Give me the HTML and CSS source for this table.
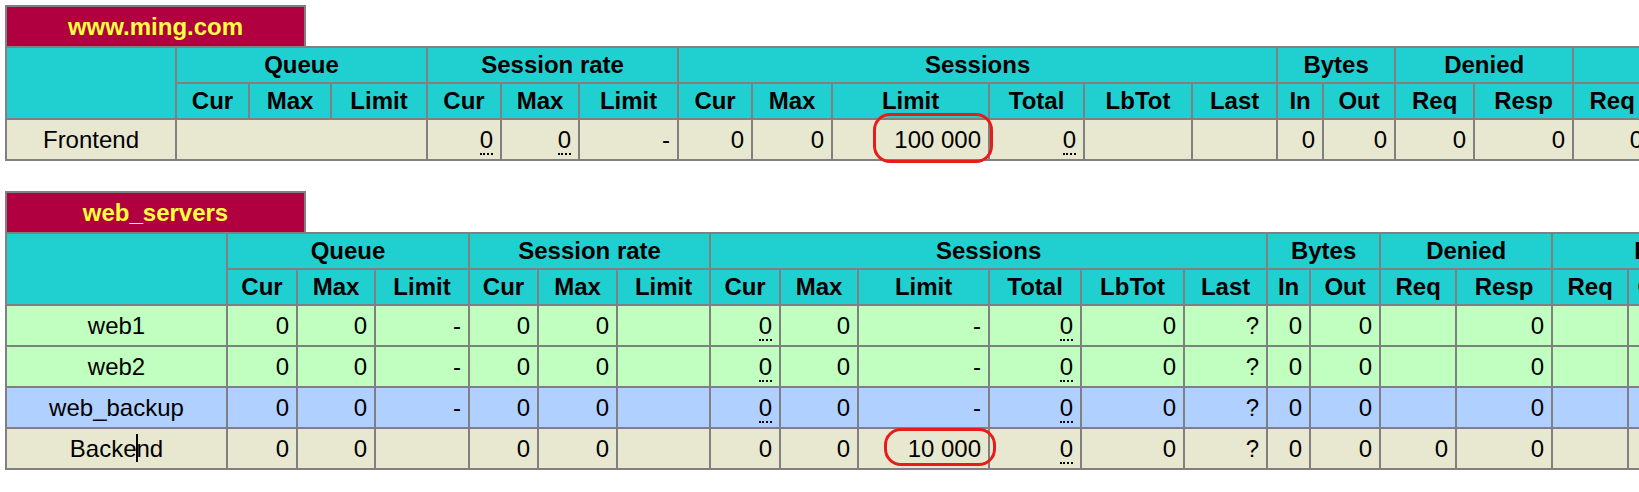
FILE: index.html
```html
<!DOCTYPE html>
<html>
<head>
<meta charset="utf-8">
<title>Statistics Report</title>
<link rel="stylesheet" href="styles.css">
</head>
<body>
<div class="proxy">
  <div class="pxname"><a class="px" href="#www.ming.com">www.ming.com</a></div>
  <table class="tbl fe">
    <colgroup>
      <col><col><col><col><col><col><col><col><col><col><col><col><col><col><col><col><col><col><col><col>
    </colgroup>
    <tr class="titre">
      <th rowspan="2"></th>
      <th colspan="3">Queue</th>
      <th colspan="3">Session rate</th>
      <th colspan="6">Sessions</th>
      <th colspan="2">Bytes</th>
      <th colspan="2">Denied</th>
      <th colspan="3">Errors</th>
    </tr>
    <tr class="titre">
      <th>Cur</th><th>Max</th><th>Limit</th>
      <th>Cur</th><th>Max</th><th>Limit</th>
      <th>Cur</th><th>Max</th><th>Limit</th><th>Total</th><th>LbTot</th><th>Last</th>
      <th>In</th><th>Out</th>
      <th>Req</th><th>Resp</th>
      <th>Req</th><th>Conn</th><th>Resp</th>
    </tr>
    <tr class="frontend">
      <td class="ac">Frontend</td>
      <td colspan="3"></td>
      <td><u>0</u></td><td><u>0</u></td><td>-</td>
      <td>0</td><td>0</td><td><span class="mark mark-fe">100 000</span></td><td><u>0</u></td><td></td><td></td>
      <td>0</td><td>0</td>
      <td>0</td><td>0</td>
      <td>0</td><td></td><td></td>
    </tr>
  </table>
</div>

<div class="proxy">
  <div class="pxname"><a class="px" href="#web_servers">web_servers</a></div>
  <table class="tbl be">
    <colgroup>
      <col><col><col><col><col><col><col><col><col><col><col><col><col><col><col><col><col><col><col><col>
    </colgroup>
    <tr class="titre">
      <th rowspan="2"></th>
      <th colspan="3">Queue</th>
      <th colspan="3">Session rate</th>
      <th colspan="6">Sessions</th>
      <th colspan="2">Bytes</th>
      <th colspan="2">Denied</th>
      <th colspan="3">Errors</th>
    </tr>
    <tr class="titre">
      <th>Cur</th><th>Max</th><th>Limit</th>
      <th>Cur</th><th>Max</th><th>Limit</th>
      <th>Cur</th><th>Max</th><th>Limit</th><th>Total</th><th>LbTot</th><th>Last</th>
      <th>In</th><th>Out</th>
      <th>Req</th><th>Resp</th>
      <th>Req</th><th>Conn</th><th>Resp</th>
    </tr>
    <tr class="active">
      <td class="ac">web1</td>
      <td>0</td><td>0</td><td>-</td>
      <td>0</td><td>0</td><td></td>
      <td><u>0</u></td><td>0</td><td>-</td><td><u>0</u></td><td>0</td><td>?</td>
      <td>0</td><td>0</td>
      <td></td><td>0</td>
      <td></td><td>0</td><td>0</td>
    </tr>
    <tr class="active">
      <td class="ac">web2</td>
      <td>0</td><td>0</td><td>-</td>
      <td>0</td><td>0</td><td></td>
      <td><u>0</u></td><td>0</td><td>-</td><td><u>0</u></td><td>0</td><td>?</td>
      <td>0</td><td>0</td>
      <td></td><td>0</td>
      <td></td><td>0</td><td>0</td>
    </tr>
    <tr class="backup">
      <td class="ac">web_backup</td>
      <td>0</td><td>0</td><td>-</td>
      <td>0</td><td>0</td><td></td>
      <td><u>0</u></td><td>0</td><td>-</td><td><u>0</u></td><td>0</td><td>?</td>
      <td>0</td><td>0</td>
      <td></td><td>0</td>
      <td></td><td>0</td><td>0</td>
    </tr>
    <tr class="backend">
      <td class="ac">Backe<span class="caret"></span>nd</td>
      <td>0</td><td>0</td><td></td>
      <td>0</td><td>0</td><td></td>
      <td>0</td><td>0</td><td><span class="mark mark-be">10 000</span></td><td><u>0</u></td><td>0</td><td>?</td>
      <td>0</td><td>0</td>
      <td>0</td><td>0</td>
      <td></td><td>0</td><td>0</td>
    </tr>
  </table>
</div>
</body>
</html>
```

FILE: styles.css
```css
html, body {
  overflow: hidden;
}

body {
  margin: 0;
  padding: 5px 0 0 5px;
  background: #ffffff;
  color: #000000;
  font-family: "Liberation Sans", Arial, Helvetica, sans-serif;
  font-size: 24px;
}

.proxy + .proxy {
  margin-top: 30px;
}

.pxname {
  width: 297px;
  height: 39px;
  border: 2px solid #808080;
  border-bottom: 0;
  background: #b00040;
  text-align: center;
  font-weight: bold;
  line-height: 39px;
}

.pxname .px {
  color: #ffff40;
  text-decoration: none;
}

.tbl {
  border-collapse: collapse;
  table-layout: fixed;
}

.tbl th,
.tbl td {
  border: 2px solid #808080;
  padding: 0 7px;
  white-space: nowrap;
}

.tbl th {
  height: 34px;
  background: #20d0d0;
  font-weight: bold;
  text-align: center;
}

.tbl td {
  height: 39px;
  text-align: right;
}

.tbl td.ac {
  text-align: center;
}

.tbl u {
  text-decoration: none;
  border-bottom: 2px dotted #000000;
}

.frontend td,
.backend td {
  background: #e8e8d0;
}

.active td {
  background: #c0ffc0;
}

.backup td {
  background: #b0d0ff;
}

/* column widths: frontend table */
.fe { width: 1807px; }
.fe col:nth-child(1) { width: 170px; }
.fe col:nth-child(2) { width: 73px; }
.fe col:nth-child(3) { width: 82px; }
.fe col:nth-child(4) { width: 96px; }
.fe col:nth-child(5) { width: 74px; }
.fe col:nth-child(6) { width: 78px; }
.fe col:nth-child(7) { width: 99px; }
.fe col:nth-child(8) { width: 74px; }
.fe col:nth-child(9) { width: 80px; }
.fe col:nth-child(10) { width: 157px; }
.fe col:nth-child(11) { width: 95px; }
.fe col:nth-child(12) { width: 108px; }
.fe col:nth-child(13) { width: 85px; }
.fe col:nth-child(14) { width: 46px; }
.fe col:nth-child(15) { width: 72px; }
.fe col:nth-child(16) { width: 79px; }
.fe col:nth-child(17) { width: 99px; }
.fe col:nth-child(18) { width: 78px; }
.fe col:nth-child(19) { width: 80px; }
.fe col:nth-child(20) { width: 80px; }

/* column widths: backend table */
.be { width: 1751px; }
.be col:nth-child(1) { width: 221px; }
.be col:nth-child(2) { width: 70px; }
.be col:nth-child(3) { width: 78px; }
.be col:nth-child(4) { width: 94px; }
.be col:nth-child(5) { width: 69px; }
.be col:nth-child(6) { width: 79px; }
.be col:nth-child(7) { width: 93px; }
.be col:nth-child(8) { width: 70px; }
.be col:nth-child(9) { width: 78px; }
.be col:nth-child(10) { width: 131px; }
.be col:nth-child(11) { width: 92px; }
.be col:nth-child(12) { width: 103px; }
.be col:nth-child(13) { width: 83px; }
.be col:nth-child(14) { width: 43px; }
.be col:nth-child(15) { width: 70px; }
.be col:nth-child(16) { width: 76px; }
.be col:nth-child(17) { width: 96px; }
.be col:nth-child(18) { width: 76px; }
.be col:nth-child(19) { width: 80px; }
.be col:nth-child(20) { width: 80px; }

/* red annotation rings */
.mark {
  border: 3px solid #ea1b1b;
  border-radius: 17px;
}

.mark-fe {
  padding: 10px 9px 7px 18px;
  margin: 0 -12px 0 -21px;
}

.mark-be {
  padding: 4px 12px 1px 21px;
  margin: 0 -15px 0 -24px;
}

/* mouse text cursor left over the "Backend" label */
.caret {
  display: inline-block;
  width: 2px;
  height: 28px;
  margin: 0 -1px;
  background: #000000;
  vertical-align: -5px;
}
```
